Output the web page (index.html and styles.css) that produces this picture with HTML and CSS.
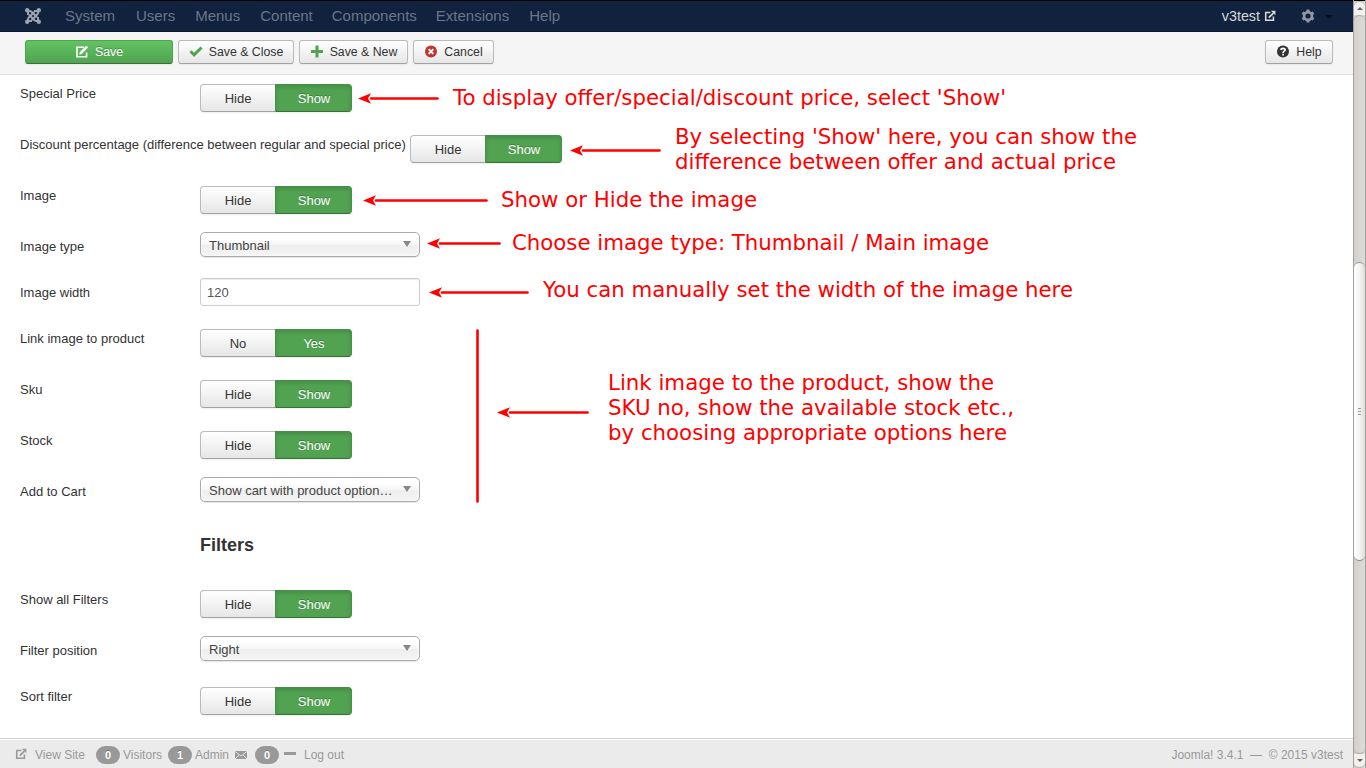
FILE: index.html
```html
<!DOCTYPE html>
<html lang="en">
<head>
<meta charset="utf-8">
<title>v3test - Administration</title>
<link rel="stylesheet" href="styles.css">
</head>
<body>
<svg class="defs" width="0" height="0">
  <defs>
    <symbol id="edit" viewBox="0 0 14 14"><path d="M9 2.200H2v9.600h9.600V7.500" fill="none" stroke="currentColor" stroke-width="1.600"/><path d="M4.300 9.700l.5-2.600L11.200.7l1.900 1.900-6.400 6.400z" fill="currentColor"/></symbol>
    <symbol id="out" viewBox="0 0 14 14"><path d="M7.500 3H2v9h9V7.500" fill="none" stroke="currentColor" stroke-width="1.800"/><path d="M5.600 9L11 3.600" stroke="currentColor" stroke-width="2"/><path d="M8 .8h5.300V6z" fill="currentColor"/></symbol>
    <symbol id="check" viewBox="0 0 14 14"><path d="M1.500 6.300l3.600 3.600L12.600 2.500" fill="none" stroke="currentColor" stroke-width="2.900"/></symbol>
    <symbol id="plus" viewBox="0 0 14 14"><path d="M7 .5v12M1 6.500h12" stroke="currentColor" stroke-width="3"/></symbol>
    <symbol id="cancel" viewBox="0 0 14 14"><circle cx="7" cy="6.500" r="6" fill="currentColor"/><path d="M4.700 4.200l4.600 4.600M9.300 4.200L4.700 8.800" stroke="#fff" stroke-width="1.900"/></symbol>
    <symbol id="question" viewBox="0 0 14 14"><circle cx="7" cy="6.500" r="6" fill="currentColor"/><path d="M4.900 5C5 2.800 9.200 2.800 9.100 4.900 9 6.300 7.100 6 7.100 7.900M7.100 8.800v1.700" fill="none" stroke="#fff" stroke-width="1.700"/></symbol>
    <symbol id="gear" viewBox="0 0 14 14"><circle cx="7" cy="7" r="3.900" fill="none" stroke="currentColor" stroke-width="2.600"/><path d="M7 .5V3M7 11v2.500M1.400 3.700l2.100 1.200M10.500 9.100l2.100 1.200M1.400 10.300l2.100-1.200M10.500 4.900l2.100-1.200" stroke="currentColor" stroke-width="3"/></symbol>
    <symbol id="mail" viewBox="0 0 14 10"><path d="M1 1h12v8H1z" fill="currentColor"/><path d="M1 1.500l6 4.500 6-4.500M1 9l4.200-4M13 9L8.800 5" fill="none" stroke="#ebebeb" stroke-width=".9"/></symbol>
    <symbol id="joomla" viewBox="0 0 16 16"><g fill="none" stroke="currentColor" stroke-width="2"><path d="M3 7V4.500Q3 3 4.500 3q1.200 0 2 .8L12 9.300"/><path d="M9 3h2.500Q13 3 13 4.500q0 1.200-.8 2L6.700 12"/><path d="M13 9v2.500q0 1.500-1.500 1.500-1.200 0-2-.8L4 6.700"/><path d="M7 13H4.500Q3 13 3 11.500q0-1.200.8-2L9.300 4"/></g><g fill="currentColor"><circle cx="2.200" cy="2.200" r="2.200"/><circle cx="13.800" cy="2.200" r="2.200"/><circle cx="2.200" cy="13.800" r="2.200"/><circle cx="13.800" cy="13.800" r="2.200"/></g></symbol>
  </defs>
</svg>
<div class="window">
  <div class="page">
    <nav class="navbar">
      <svg class="brand"><use href="#joomla"/></svg>
      <span>System</span><span>Users</span><span>Menus</span><span>Content</span><span>Components</span><span>Extensions</span><span>Help</span>
      <div class="site">v3test<svg class="site-icon"><use href="#out"/></svg></div>
      <svg class="gear"><use href="#gear"/></svg>
      <i class="caret"></i>
    </nav>
    <div class="toolbar">
      <button class="btn save"><svg><use href="#edit"/></svg>Save</button>
      <button class="btn close"><svg class="green"><use href="#check"/></svg>Save &amp; Close</button>
      <button class="btn new"><svg class="green"><use href="#plus"/></svg>Save &amp; New</button>
      <button class="btn cancel"><svg class="red"><use href="#cancel"/></svg>Cancel</button>
      <button class="btn help"><svg><use href="#question"/></svg>Help</button>
    </div>
    <main class="form">
      <div class="row"><label>Special Price</label><div class="toggle"><b>Hide</b><b class="on">Show</b></div></div>
      <div class="row"><label class="wide">Discount percentage (difference between regular and special price)</label><div class="toggle"><b>Hide</b><b class="on">Show</b></div></div>
      <div class="row"><label>Image</label><div class="toggle"><b>Hide</b><b class="on">Show</b></div></div>
      <div class="row"><label>Image type</label><div class="select"><span>Thumbnail</span><i></i></div></div>
      <div class="row"><label>Image width</label><input class="field" value="120"></div>
      <div class="row"><label>Link image to product</label><div class="toggle"><b>No</b><b class="on">Yes</b></div></div>
      <div class="row"><label>Sku</label><div class="toggle"><b>Hide</b><b class="on">Show</b></div></div>
      <div class="row"><label>Stock</label><div class="toggle"><b>Hide</b><b class="on">Show</b></div></div>
      <div class="row"><label>Add to Cart</label><div class="select"><span>Show cart with product option…</span><i></i></div></div>
      <h3>Filters</h3>
      <div class="row"><label>Show all Filters</label><div class="toggle"><b>Hide</b><b class="on">Show</b></div></div>
      <div class="row"><label>Filter position</label><div class="select"><span>Right</span><i></i></div></div>
      <div class="row"><label>Sort filter</label><div class="toggle"><b>Hide</b><b class="on">Show</b></div></div>
    </main>
    <footer class="status">
      <svg class="view"><use href="#out"/></svg><span class="viewsite">View Site</span>
      <em>0</em><span class="visitors">Visitors</span><em>1</em><span class="admin">Admin</span>
      <svg class="mail"><use href="#mail"/></svg><em>0</em><i class="dash"></i><span>Log out</span>
      <span class="copy">Joomla! 3.4.1 &nbsp;—&nbsp; © 2015 v3test</span>
    </footer>
  </div>
  <div class="scrollbar">
    <div class="cap up"><i></i></div>
    <div class="track"><div class="thumb"><i></i><i></i><i></i></div></div>
    <div class="cap down"><i></i></div>
  </div>
</div>
<svg class="notes" width="1366" height="768">
  <defs><marker id="head" markerUnits="userSpaceOnUse" markerWidth="14" markerHeight="12" refX="0" refY="6" orient="auto-start-reverse" viewBox="0 0 14 12"><path d="M13 6L0 .8l3 5.200L0 11.200z"/></marker></defs>
  <g class="arrows">
    <path d="M371 98.500H437.500"/><path d="M583 150.500H659.500"/><path d="M376 200.500H486.500"/><path d="M440 243.500H499.500"/><path d="M442 292.500H527.500"/><path d="M510 412.500H587.500"/>
  </g>
  <path class="bar" d="M477.500 330.500V501.500"/>
  <g class="text">
    <text x="453" y="105" textLength="553">To display offer/special/discount price, select 'Show'</text>
    <text x="675" y="144" textLength="462">By selecting 'Show' here, you can show the</text>
    <text x="675" y="169" textLength="441">difference between offer and actual price</text>
    <text x="501" y="207" textLength="256">Show or Hide the image</text>
    <text x="512" y="250" textLength="477">Choose image type: Thumbnail / Main image</text>
    <text x="543" y="297" textLength="530">You can manually set the width of the image here</text>
    <text x="608" y="390" textLength="386">Link image to the product, show the</text>
    <text x="608" y="415" textLength="406">SKU no, show the available stock etc.,</text>
    <text x="608" y="440" textLength="399">by choosing appropriate options here</text>
  </g>
</svg>
</body>
</html>
```
FILE: styles.css
```css
* { box-sizing: border-box; }
body { margin: 0; height: 768px; overflow: hidden; background: #fff; color: #333; font: 13px/18px "Liberation Sans", Arial, sans-serif; }
svg { display: block; flex: none; }
.defs { position: absolute; }
.window { display: flex; height: 768px; }
.page { width: 1353px; display: flex; flex-direction: column; }

.navbar { height: 32px; flex: none; border-top: 1px solid #000; border-bottom: 1px solid #0c192e; background: #10223e; display: flex; align-items: center; padding-left: 25px; font-size: 15px; color: #6c7688; }
.navbar > span { padding: 0 10px; line-height: 30px; }
.navbar > span:first-of-type { padding-right: 11px; }
.navbar > span:nth-of-type(4), .navbar > span:nth-of-type(5) { padding-right: 9px; }
.brand { width: 16px; height: 16px; margin-right: 14px; color: #9ba3af; }
.site { margin-left: auto; display: flex; align-items: center; color: #d9d9d9; font-size: 14.300px; }
.site-icon { width: 12px; height: 12px; margin-left: 4px; }
.gear { width: 14px; height: 14px; margin-left: 25px; color: #9198a4; }
.caret { border: 4px solid transparent; border-top-color: #060d18; border-bottom: 0; margin: 2px 20px 0 10px; }

.toolbar { height: 43px; flex: none; background: #f5f5f5; border-bottom: 1px solid #e0e0e0; padding: 8px 20px 0 25px; display: flex; align-items: flex-start; gap: 5px; }
.btn { height: 24px; border: 1px solid #bbb; border-bottom-color: #a2a2a2; border-radius: 3px; background: linear-gradient(#fff, #e6e6e6); color: #333; font: 12.300px/22px "Liberation Sans", Arial, sans-serif; padding: 0; display: flex; align-items: center; justify-content: center; white-space: nowrap; box-shadow: 0 1px 2px rgba(0,0,0,.05); }
.btn svg { width: 14px; height: 14px; margin: -1px 6px 0 0; }
.save { width: 148px; color: #fff; border-color: #51a351 #51a351 #387038; background: linear-gradient(#62c462, #51a351); text-shadow: 0 -1px 0 rgba(0,0,0,.25); }
.close { width: 116px; }
.new { width: 109px; }
.cancel { width: 81px; }
.help { width: 68px; margin-left: auto; }
.green { color: #51a351; }
.red { color: #bd362f; }

.form { flex: 1; min-height: 0; padding: 4px 20px 0; overflow: hidden; }
.row { display: flex; align-items: flex-start; margin-bottom: 18px; }
.row label { width: 180px; height: 24px; padding-top: 6px; white-space: nowrap; }
.row .wide { width: 390px; letter-spacing: -.01px; }
.toggle { display: flex; width: 152px; height: 28px; margin-top: 5px; border-radius: 4px; box-shadow: 0 1px 2px rgba(0,0,0,.07); }
.toggle b { width: 75px; border: 1px solid #bbb; border-right: 0; border-bottom-color: #a2a2a2; border-radius: 4px 0 0 4px; background: linear-gradient(#fff, #e6e6e6); font-weight: normal; text-align: center; line-height: 27px; }
.toggle .on { width: 77px; padding-left: 1px; color: #fff; border: 1px solid #46914a; border-bottom-color: #387038; border-radius: 0 4px 4px 0; background: #51a351; box-shadow: inset 0 2px 4px rgba(0,0,0,.15); text-shadow: 0 -1px 0 rgba(0,0,0,.25); }
.select { width: 220px; height: 25px; margin-bottom: 3px; border: 1px solid #aaa; border-radius: 5px; padding: 0 8px; display: flex; align-items: center; justify-content: space-between; color: #444; line-height: 25px; background: linear-gradient(#fff 20%, #f6f6f6 50%, #eee 52%, #f4f4f4 100%); box-shadow: inset 0 0 3px #fff, 0 1px 1px rgba(0,0,0,.1); white-space: nowrap; }
.select span { padding-top: 1px; }
.select i { border: 4px solid transparent; border-top: 6px solid #888; border-bottom: 0; margin-top: -1px; }
.field { width: 220px; height: 28px; border: 1px solid #ccc; border-radius: 3px; padding: 1px 6px; color: #555; font: 13px "Liberation Sans", Arial, sans-serif; box-shadow: inset 0 1px 1px rgba(0,0,0,.075); }
h3 { margin: 27px 0 27px 180px; font-size: 18px; line-height: 26px; }

.status { height: 30px; flex: none; background: #ebebeb; border-top: 1px solid #d4d4d4; box-shadow: inset 0 1px 0 #fff; display: flex; align-items: center; padding: 3px 10px 0 15px; color: #999; font-size: 12px; white-space: nowrap; }
.status em { width: 24px; height: 18px; border-radius: 9px; background: #999; color: #fff; font: bold 11px/18px "Liberation Sans", Arial, sans-serif; text-align: center; text-shadow: 0 -1px 0 rgba(0,0,0,.25); }
.view { width: 12px; height: 12px; margin: -2px 8px 0 0; }
.viewsite { width: 61px; }
.visitors { width: 48px; padding-left: 3px; }
.admin { width: 42px; padding-left: 3px; }
.mail { width: 14px; height: 10px; margin: -1px 7px 0 0; }
.dash { width: 12px; height: 3px; background: #999; margin: -3px 8px 0 5px; }
.copy { margin-left: auto; }

.scrollbar { width: 13px; display: flex; flex-direction: column; background: linear-gradient(90deg, #d2d0ce, #dedcda); border: solid #a3a09d; border-width: 0 1px; box-shadow: inset 0 1px #000; }
.cap { height: 14px; flex: none; display: flex; align-items: center; justify-content: center; background: #f2f1f0; border: 0 solid #b4b1ae; }
.up { margin-top: 1px; border-top-width: 1px; border-radius: 6px 6px 0 0; }
.down { border-bottom-width: 1px; border-radius: 0 0 6px 6px; }
.cap i { border: 3px solid transparent; }
.up i { border-top: 0; border-bottom-color: #666; }
.down i { border-bottom: 0; border-top-color: #666; }
.track { flex: 1; padding-top: 246px; border: solid #aaa7a4; border-width: 1px 0; border-radius: 6px; background: linear-gradient(90deg, #d2d0ce, #dedcda); }
.thumb { height: 299px; border: 1px solid #918e8b; border-width: 1px 0; border-radius: 6px; background: linear-gradient(90deg, #fff, #f5f4f2 50%, #dfddda); display: flex; flex-direction: column; align-items: center; justify-content: center; gap: 2px; }
.thumb i { width: 3px; height: 1px; background: #999; }

.notes { position: absolute; left: 0; top: 0; pointer-events: none; }
.arrows path, .bar { stroke: #f00; stroke-width: 2.600; stroke-linecap: round; marker-start: url(#head); }
.bar { marker-start: none; }
#head path { fill: #f00; stroke: none; }
.text { fill: #f00; font: 21.300px "DejaVu Sans", sans-serif; }
```
